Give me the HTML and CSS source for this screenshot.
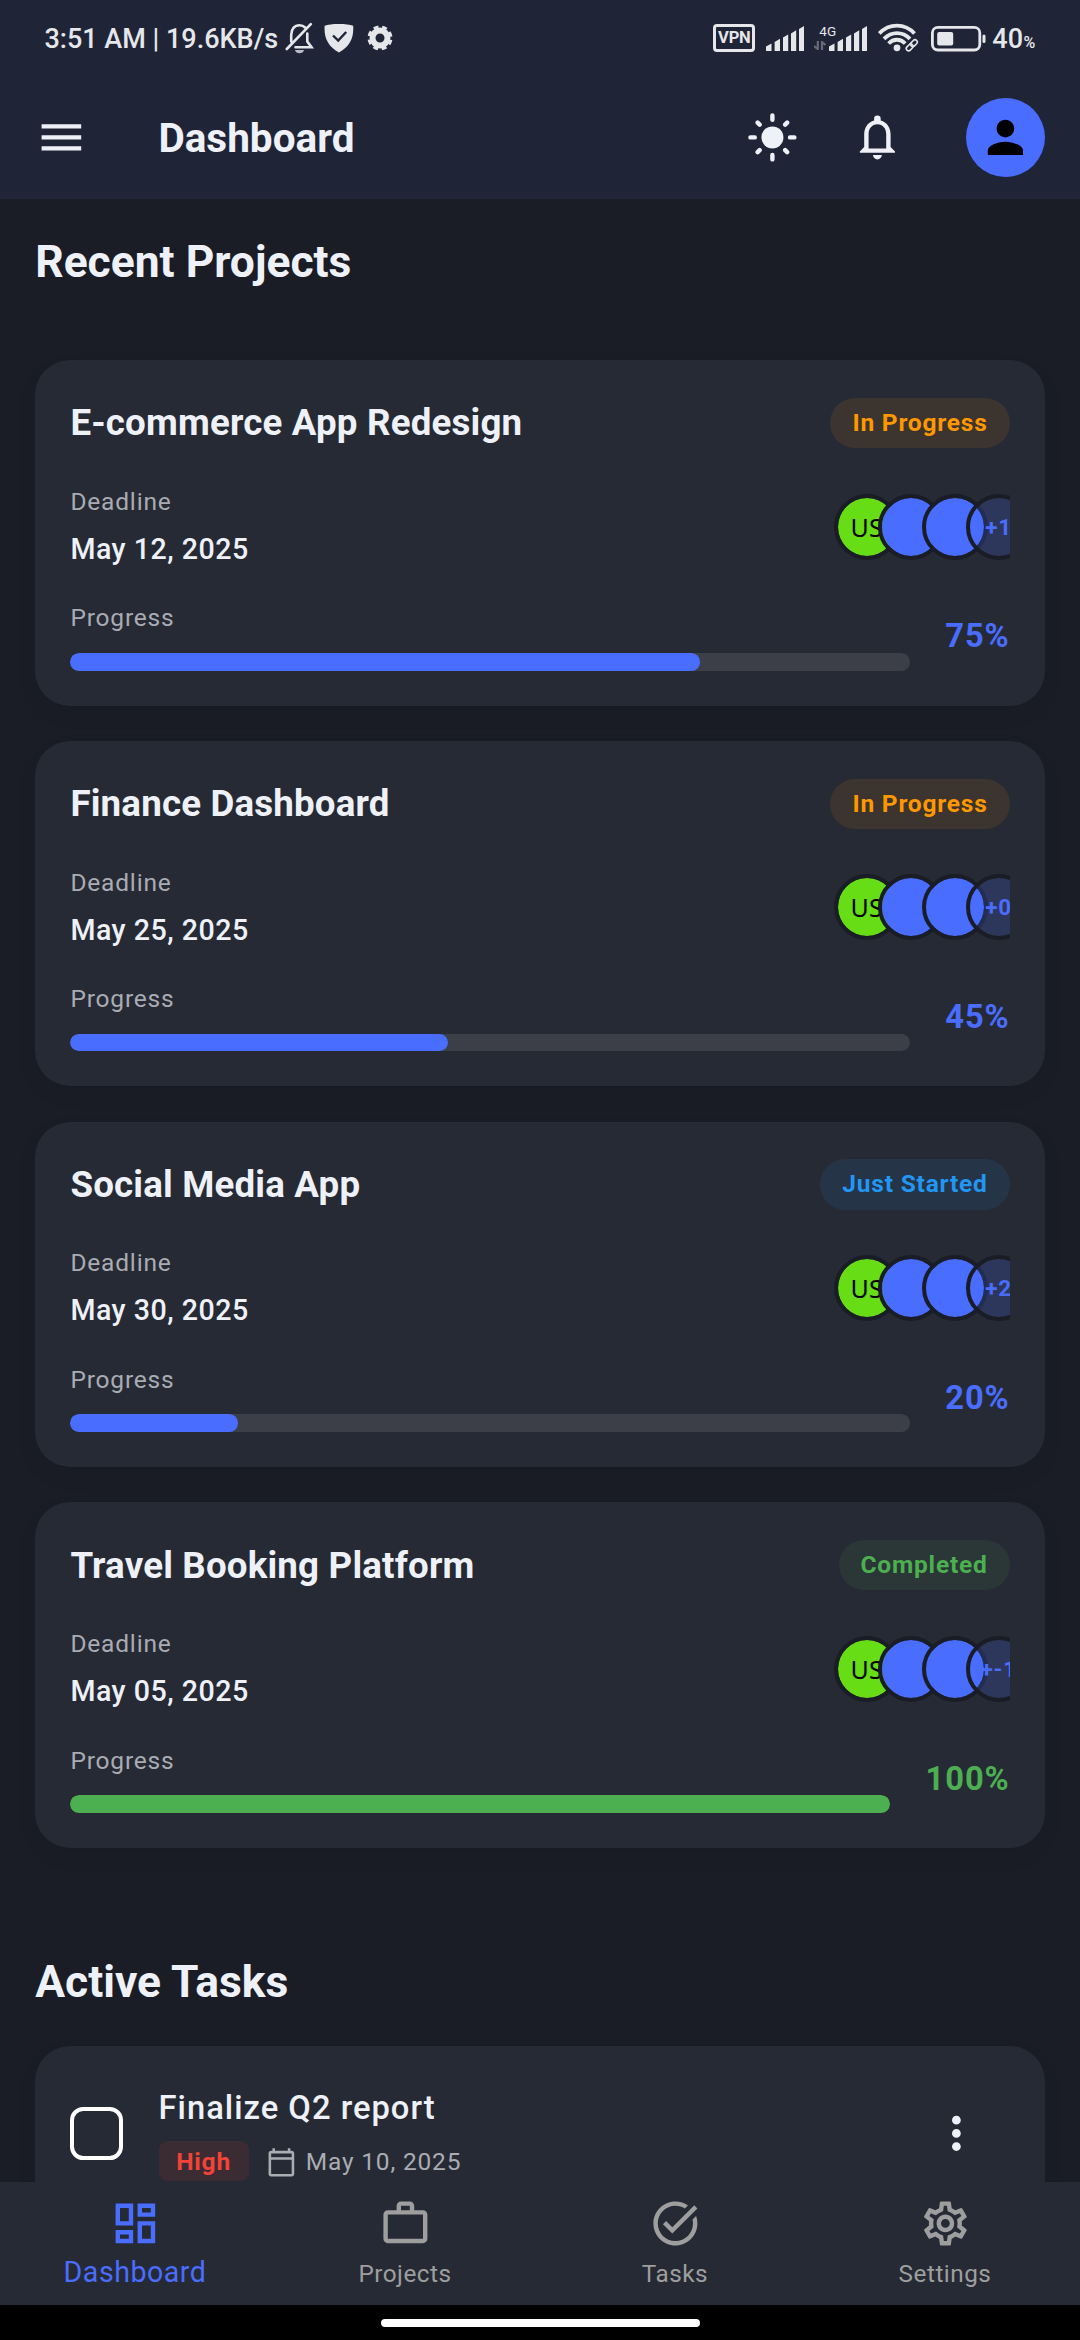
FILE: index.html
```html
<!DOCTYPE html>
<html lang="en">
<head>
<meta charset="utf-8">
<title>Dashboard</title>
<link rel="stylesheet" href="styles.css">
</head>
<body>
<div class="screen">
  <header class="top">
    <div class="status">
      <span class="status-text">3:51 AM | 19.6KB/s</span>
      <svg class="s-bell" width="30" height="32" viewBox="0 0 30 32" fill="none" stroke="#e6e7ea" stroke-width="2.6">
        <path d="M6.2 19.500V13c0-6 3.300-9.700 8.300-9.700 2.300 0 4.200.8 5.600 2.200M22.300 11.500V19.500l4.200 5.700H10.500M25.800 2.200 1.800 27" stroke-linecap="round"/>
        <path d="M10 28h9c-.6 2.400-2.300 3.300-4.500 3.300S10.600 30.400 10 28z" fill="#b9bbc3" stroke="none"/>
      </svg>
      <svg class="s-shield" width="30" height="30" viewBox="0 0 30 30">
        <path d="M.6 2.800C6 .4 23.600.4 29.200 2.800c.7 12-3.200 20.400-14.300 26.700C3.800 23.200-.1 14.800.6 2.800z" fill="#e6e7ea"/>
        <path d="M9 12.500l5.200 5 8-8.500" fill="none" stroke="#1f2437" stroke-width="2.400"/>
      </svg>
      <svg class="s-gear" width="26" height="26" viewBox="0 0 26 26">
        <circle cx="13" cy="13" r="7.500" fill="none" stroke="#e6e7ea" stroke-width="6"/>
        <circle cx="13" cy="13" r="11.200" fill="none" stroke="#e6e7ea" stroke-width="2.600" stroke-dasharray="5 3.796" transform="rotate(9.700 13 13)"/>
      </svg>
      <span class="spacer"></span>
      <span class="vpn">VPN</span>
      <svg class="s-sig" width="39" height="25" viewBox="0 0 39 25" fill="#e6e7ea">
        <path d="M0 20.500 5.500 17.500V25H0zM8.600 16 14 12.800V25H8.600zM17 11.600 22.200 8.400V25H17zM25 7.600 30.200 4.200V25H25zM33 3 38 0V25H33z"/>
      </svg>
      <span class="net"><span class="net-label">4G</span>
        <svg width="12" height="9" viewBox="0 0 12 9" fill="none" stroke="#666a78" stroke-width="2.200"><path d="M0 5l3.800 3V0M11.500 4 8 1v8"/></svg>
      </span>
      <svg class="s-sig2" width="39" height="25" viewBox="0 0 39 25" fill="#e6e7ea">
        <path d="M0 20.500 5.500 17.500V25H0zM8.600 16 14 12.800V25H8.600zM17 11.600 22.200 8.400V25H17zM25 7.600 30.200 4.200V25H25zM33 3 38 0V25H33z"/>
      </svg>
      <svg class="s-wifi" width="41" height="29" viewBox="0 0 41 29" fill="none" stroke="#e6e7ea" stroke-width="3.800">
        <path d="M1.300 10.500C11-.1 27-.1 36.500 10.500M6 15.800c7.500-7.700 18.500-7.700 26 0M10.600 20.500c4.800-5 11.800-5 16.600 0"/>
        <circle cx="19" cy="24.800" r="3.400" fill="#e6e7ea" stroke="none"/>
        <g stroke="#1f2437" stroke-width="4.500" transform="rotate(-45 33.800 22.300)"><rect x="27" y="20" width="7.600" height="4.600" rx="2.300"/><rect x="33" y="20" width="7.600" height="4.600" rx="2.300"/></g>
        <g stroke-width="1.600" transform="rotate(-45 33.800 22.300)"><rect x="27" y="20" width="7.600" height="4.600" rx="2.300"/><rect x="33" y="20" width="7.600" height="4.600" rx="2.300"/></g>
      </svg>
      <svg class="s-bat" width="56" height="26" viewBox="0 0 56 26">
        <rect x="1.400" y="1.400" width="47.400" height="22.600" rx="5.500" fill="none" stroke="#e6e7ea" stroke-width="2.800"/>
        <rect x="6.200" y="6" width="16" height="13.400" rx="2" fill="#e6e7ea"/>
        <rect x="51.500" y="8.500" width="3" height="8.500" rx="1.500" fill="#e6e7ea"/>
      </svg>
      <span class="status-text">40</span><span class="pct">%</span>
    </div>
    <div class="appbar">
      <svg class="icon" viewBox="0 0 24 24"><path d="M3 18h18v-2H3v2zm0-5h18v-2H3v2zm0-7v2h18V6H3z"/></svg>
      <h1 class="title">Dashboard</h1>
      <svg class="icon" viewBox="0 0 24 24"><circle cx="12" cy="12" r="5"/><path stroke="#eef1f8" stroke-width="2" stroke-linecap="round" d="M12 2v2M12 20v2M2 12h2M20 12h2M5.300 5.300l.9.9M17.800 17.800l.9.9M5.300 18.700l.9-.9M17.800 6.200l.9-.9"/></svg>
      <svg class="icon bell" viewBox="0 0 24 24"><path d="M4 19v-.6l2-2V10.500c0-3 1.700-5.400 4.500-6.200V3.500a1.500 1.500 0 0 1 3 0v.8c2.800.8 4.500 3.200 4.500 6.200v5.900l2 2v.6zM8 17h8v-6.500C16 8 14.500 6 12 6s-4 2-4 4.500zM10 20h4c0 1.100-.9 2-2 2s-2-.9-2-2z" fill-rule="evenodd"/></svg>
      <span class="profile"><svg class="icon dark" viewBox="0 0 24 24"><path d="M12 12c2.210 0 4-1.790 4-4s-1.790-4-4-4-4 1.790-4 4 1.790 4 4 4zm0 2c-2.670 0-8 1.340-8 4v2h16v-2c0-2.660-5.330-4-8-4z"/></svg></span>
    </div>
  </header>

  <main class="content">
    <h2 class="section">Recent Projects</h2>
    <div class="cards">
      <article class="card">
        <div class="row head"><h3 class="name">E-commerce App Redesign</h3><span class="badge orange">In Progress</span></div>
        <div class="row info"><div class="deadline"><span class="label">Deadline</span><span class="date">May 12, 2025</span></div>
          <div class="team"><span class="av user">US</span><span class="av"></span><span class="av"></span><span class="av more">+1</span></div></div>
        <div class="row prog"><div class="meter"><span class="label">Progress</span><div class="track"><div class="fill" style="width:75%"></div></div></div><span class="value">75%</span></div>
      </article>
      <article class="card">
        <div class="row head"><h3 class="name">Finance Dashboard</h3><span class="badge orange">In Progress</span></div>
        <div class="row info"><div class="deadline"><span class="label">Deadline</span><span class="date">May 25, 2025</span></div>
          <div class="team"><span class="av user">US</span><span class="av"></span><span class="av"></span><span class="av more">+0</span></div></div>
        <div class="row prog"><div class="meter"><span class="label">Progress</span><div class="track"><div class="fill" style="width:45%"></div></div></div><span class="value">45%</span></div>
      </article>
      <article class="card">
        <div class="row head"><h3 class="name">Social Media App</h3><span class="badge blue">Just Started</span></div>
        <div class="row info"><div class="deadline"><span class="label">Deadline</span><span class="date">May 30, 2025</span></div>
          <div class="team"><span class="av user">US</span><span class="av"></span><span class="av"></span><span class="av more">+2</span></div></div>
        <div class="row prog"><div class="meter"><span class="label">Progress</span><div class="track"><div class="fill" style="width:20%"></div></div></div><span class="value">20%</span></div>
      </article>
      <article class="card done">
        <div class="row head"><h3 class="name">Travel Booking Platform</h3><span class="badge green">Completed</span></div>
        <div class="row info"><div class="deadline"><span class="label">Deadline</span><span class="date">May 05, 2025</span></div>
          <div class="team"><span class="av user">US</span><span class="av"></span><span class="av"></span><span class="av more">+-1</span></div></div>
        <div class="row prog"><div class="meter"><span class="label">Progress</span><div class="track"><div class="fill" style="width:100%"></div></div></div><span class="value">100%</span></div>
      </article>
    </div>
    <h2 class="section tasks-title">Active Tasks</h2>
    <article class="card task">
      <span class="check"></span>
      <div class="task-body">
        <div class="task-name">Finalize Q2 report</div>
        <div class="task-meta"><span class="prio">High</span>
          <svg class="cal" viewBox="0 0 24 24"><path d="M20 3h-1V1h-2v2H7V1H5v2H4c-1.100 0-2 .9-2 2v16c0 1.100.9 2 2 2h16c1.100 0 2-.9 2-2V5c0-1.100-.9-2-2-2zm0 18H4V10h16v11zm0-13H4V5h16v3z"/></svg>
          <span class="label">May 10, 2025</span></div>
      </div>
      <svg class="icon more-icon" viewBox="0 0 24 24"><path d="M12 8c1.100 0 2-.9 2-2s-.9-2-2-2-2 .9-2 2 .9 2 2 2zm0 2c-1.100 0-2 .9-2 2s.9 2 2 2 2-.9 2-2-.9-2-2-2zm0 6c-1.100 0-2 .9-2 2s.9 2 2 2 2-.9 2-2-.9-2-2-2z"/></svg>
    </article>
  </main>

  <nav class="nav">
    <div class="tab active"><svg class="icon" viewBox="0 0 24 24"><path d="M19 5v2h-4V5h4M9 5v6H5V5h4m10 8v6h-4v-6h4M9 17v2H5v-2h4M21 3h-8v6h8V3zM11 3H3v10h8V3zm10 8h-8v10h8V11zm-10 4H3v6h8v-6z"/></svg><span>Dashboard</span></div>
    <div class="tab"><svg class="icon" viewBox="0 0 24 24"><path fill-rule="evenodd" d="M14 6V4h-4v2h4zM4 8v11h16V8H4zm16-2c1.110 0 2 .89 2 2v11c0 1.110-.89 2-2 2H4c-1.110 0-2-.89-2-2l.01-11c0-1.110.88-2 1.990-2h4V4c0-1.110.89-2 2-2h4c1.110 0 2 .89 2 2v2h4z"/></svg><span>Projects</span></div>
    <div class="tab"><svg class="icon" viewBox="0 0 24 24"><path d="M22 5.180 10.590 16.600l-4.240-4.240 1.410-1.410 2.830 2.830 10-10L22 5.180zM19.790 10.220c.13.570.21 1.170.21 1.780 0 4.420-3.580 8-8 8s-8-3.580-8-8 3.580-8 8-8c1.580 0 3.040.46 4.280 1.250l1.440-1.440C16.100 2.670 14.130 2 12 2 6.480 2 2 6.480 2 12s4.480 10 10 10 10-4.480 10-10c0-1.190-.22-2.330-.6-3.390l-1.610 1.610z"/></svg><span>Tasks</span></div>
    <div class="tab"><svg class="icon" viewBox="0 0 24 24"><path d="M19.430 12.980c.04-.32.07-.64.07-.98 0-.34-.03-.66-.07-.98l2.110-1.650c.19-.15.24-.42.12-.64l-2-3.460c-.09-.16-.26-.25-.44-.25-.06 0-.12.010-.17.030l-2.490 1c-.52-.4-1.080-.73-1.690-.98l-.38-2.650C14.460 2.180 14.250 2 14 2h-4c-.25 0-.46.180-.49.42l-.38 2.650c-.61.25-1.170.59-1.690.98l-2.490-1c-.06-.02-.12-.03-.18-.03-.17 0-.34.09-.43.25l-2 3.460c-.13.22-.07.49.12.64l2.110 1.650c-.04.32-.07.65-.07.98 0 .33.03.66.07.98l-2.110 1.650c-.19.15-.24.42-.12.64l2 3.460c.09.16.26.25.44.25.06 0 .12-.01.17-.03l2.490-1c.52.4 1.080.73 1.690.98l.38 2.650c.03.24.24.42.49.42h4c.25 0 .46-.18.49-.42l.38-2.650c.61-.25 1.170-.59 1.690-.98l2.490 1c.06.02.12.03.18.03.17 0 .34-.09.43-.25l2-3.460c.12-.22.07-.49-.12-.64l-2.110-1.650zm-1.980-1.710c.04.31.05.52.05.73 0 .21-.02.43-.05.73l-.14 1.130.89.7 1.080.84-.7 1.210-1.270-.51-1.040-.42-.9.68c-.43.32-.84.56-1.250.73l-1.060.43-.16 1.130-.2 1.350h-1.400l-.19-1.350-.16-1.130-1.060-.43c-.43-.18-.83-.41-1.230-.71l-.91-.7-1.060.43-1.270.51-.7-1.210 1.080-.84.89-.7-.14-1.130c-.03-.31-.05-.54-.05-.74s.02-.43.05-.73l.14-1.130-.89-.7-1.080-.84.7-1.210 1.270.51 1.040.42.9-.68c.43-.32.84-.56 1.250-.73l1.060-.43.16-1.130.2-1.350h1.390l.19 1.350.16 1.130 1.060.43c.43.18.83.41 1.230.71l.91.7 1.060-.43 1.270-.51.7 1.210-1.070.85-.89.7.14 1.130zM12 8c-2.210 0-4 1.790-4 4s1.790 4 4 4 4-1.790 4-4-1.790-4-4-4zm0 6c-1.100 0-2-.9-2-2s.9-2 2-2 2 .9 2 2-.9 2-2 2z"/></svg><span>Settings</span></div>
  </nav>
  <div class="home"><span class="pill"></span></div>
</div>
</body>
</html>
```
FILE: styles.css
```css
* { box-sizing: border-box; }
body { margin: 0; background: #1a1d26; font-family: Roboto, "Liberation Sans", sans-serif; color: #eef1f8; }
h1, h2, h3 { margin: 0; font-weight: 700; }
svg { display: block; flex: none; }
.screen { width: 1080px; height: 2340px; display: flex; flex-direction: column; overflow: hidden; }

.top { height: 199px; flex: none; background: #1f2437; display: flex; flex-direction: column; }
.status { height: 76px; padding: 0 45px 0 44.500px; display: flex; align-items: flex-start; color: #e6e7ea; }
.status-text { font-size: 27px; font-weight: 500; line-height: 79px; white-space: pre; }
.s-bell { margin: 22px 0 0 6.500px; }
.s-shield { margin: 22.500px 0 0 9.500px; }
.s-gear { margin: 25px 0 0 13px; }
.spacer { flex: 1; }
.vpn { width: 42px; height: 28px; margin-top: 24px; border: 3px solid #e6e7ea; border-radius: 4px; font-size: 16.500px; font-weight: 700; line-height: 22.500px; text-align: center; letter-spacing: -.2px; display: flex; justify-content: center; }
.s-sig { margin: 26px 0 0 11px; }
.net { width: 21px; margin: 22.500px 0 0 9px; display: flex; flex-direction: column; align-items: flex-start; gap: 2.500px; }
.net-label { font-size: 13.500px; line-height: 16px; margin-left: 5px; }
.s-sig2 { margin: 26px 0 0 -6px; }
.s-wifi { margin: 23px 0 0 10px; }
.s-bat { margin: 25.500px 5px 0 12px; }
.pct { font-size: 16px; font-weight: 500; line-height: 86px; margin-left: .5px; width: 11.500px; }

.appbar { height: 123px; padding: 0 35.200px; display: flex; align-items: center; }
.icon { width: 52.800px; height: 52.800px; fill: #eef1f8; }
.title { flex: 1; font-size: 40.500px; line-height: 56px; margin-left: 70.400px; }
.bell { margin-left: 52.800px; }
.profile { width: 79.200px; height: 79.200px; margin-left: 61.500px; border-radius: 50%; background: #496dff; display: flex; align-items: center; justify-content: center; }
.dark { fill: #000; }

.content { flex: 1; min-height: 0; overflow: hidden; padding: 33px 35.200px 0; }
.section { font-size: 44.400px; line-height: 60px; }
.cards { margin-top: 68.200px; display: flex; flex-direction: column; gap: 35.200px; }
.card { background: #262a34; border-radius: 35.200px; box-shadow: 0 9px 22px rgba(0, 0, 0, .05); padding: 35.200px; }
.row { display: flex; align-items: center; justify-content: space-between; }
.head { height: 55.400px; }
.name { font-size: 36.700px; line-height: 55.400px; letter-spacing: .18px; }
.badge { height: 50.400px; padding: 0 22px; border-radius: 26px; font-size: 24.500px; font-weight: 700; line-height: 50.400px; letter-spacing: .8px; }
.orange { color: #ff9800; background: rgba(255, 152, 0, .1); }
.blue { color: #2196f3; background: rgba(33, 150, 243, .1); }
.green { color: #4caf50; background: rgba(76, 175, 80, .1); }
.info { height: 85.400px; margin-top: 33.100px; }
.deadline { height: 85.400px; display: flex; flex-direction: column; gap: 10.200px; }
.label { font-size: 24.500px; line-height: 35px; letter-spacing: .82px; color: #a9acb3; }
.date { font-size: 28.600px; font-weight: 500; line-height: 41px; letter-spacing: .51px; }
.team { width: 176px; height: 66px; display: flex; overflow: hidden; }
.av { width: 66px; height: 66px; flex: none; margin-right: -22px; border: 4.400px solid #1a1d26; border-radius: 50%; background: #496dff; background-clip: padding-box; display: flex; align-items: center; justify-content: center; }
.user { background-color: #66dd14; color: #000; font: 25px "Noto Sans", sans-serif; }
.more { background-color: rgba(73, 109, 255, .2); color: #496dff; font-size: 22.500px; font-weight: 700; letter-spacing: .8px; }
.prog { height: 70.200px; margin-top: 31.100px; gap: 35.200px; }
.meter { flex: 1; display: flex; flex-direction: column; gap: 16.200px; }
.meter .label { line-height: 36.400px; }
.track { height: 17.600px; border-radius: 8.800px; background: rgba(255, 255, 255, .1); overflow: hidden; }
.fill { height: 100%; border-radius: 8.800px; background: #496dff; }
.value { padding-top: 2px; font-size: 32.700px; font-weight: 700; letter-spacing: .9px; color: #496dff; }
.done .fill { background: #4caf50; }
.done .value { color: #4caf50; }

.tasks-title { margin-top: 104.500px; }
.task { height: 240px; margin-top: 33.300px; padding-top: 38px; display: flex; align-items: flex-start; }
.check { width: 53px; height: 53px; flex: none; margin-top: 23px; border: 4.400px solid #fff; border-radius: 13.200px; }
.task-body { flex: 1; margin-left: 35.200px; }
.task-name { font-size: 32.700px; font-weight: 500; line-height: 48px; letter-spacing: 1.020px; }
.task-meta { display: flex; align-items: center; margin-top: 9px; }
.prio { height: 40.700px; padding: 0 17.600px; border-radius: 8.800px; background: rgba(244, 67, 54, .1); color: #f44336; font-size: 24.500px; font-weight: 700; line-height: 42px; letter-spacing: .82px; }
.cal { width: 30.800px; height: 30.800px; margin: 2px 8.800px 0 17.600px; fill: #a9acb3; }
.more-icon { margin: 23px 26.400px 0 0; }

.nav { height: 123px; flex: none; background: #262a34; display: grid; grid-template-columns: repeat(4, 1fr); }
.tab { display: flex; flex-direction: column; align-items: center; padding-top: 15.400px; color: #9e9e9e; font-size: 24.300px; line-height: 36px; letter-spacing: .51px; }
.tab .icon { fill: #9e9e9e; }
.tab span { margin-top: 6px; }
.active { color: #496dff; font-size: 28.600px; line-height: 42px; }
.active .icon { fill: #496dff; }
.active span { margin-top: 1px; }
.home { height: 35px; flex: none; background: #000; display: flex; justify-content: center; padding-top: 14px; }
.pill { width: 319px; height: 8px; border-radius: 4px; background: #fff; }
```
